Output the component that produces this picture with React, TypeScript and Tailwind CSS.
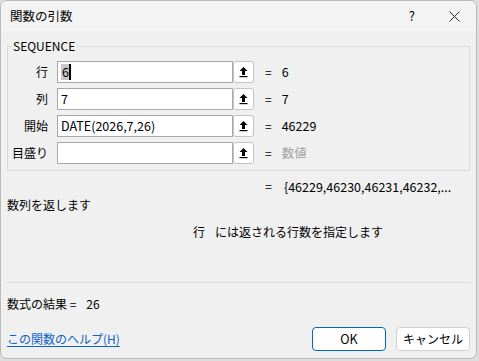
import React from "react";

const font = { fontFamily: '"Noto Sans CJK JP", "Noto Sans", sans-serif' };

function RefButton() {
  return (
    <button className="w-[21px] h-[22px] bg-white border border-[#c4c4c4] rounded-[3px] flex items-center justify-center">
      <svg width="11" height="12" viewBox="0 0 11 12">
        <path d="M5.5 1 L1.5 5 H4 V9 H7 V5 H9.5 Z" fill="#000" />
        <rect x="1.5" y="10" width="8" height="1.2" fill="#000" />
      </svg>
    </button>
  );
}

function ArgRow({ label, value, result, gray, selected }: { label: string; value: string; result: string; gray?: boolean; selected?: boolean }) {
  return (
    <div className="flex items-center h-[22px]">
      <div className="w-[40px] text-right text-[12px] leading-none">{label}</div>
      <div className="ml-[9px] w-[176px] h-[22px] bg-white border border-[#a8a8a8] flex items-center pl-[3px] text-[12.5px]">
        {selected ? (
          <span className="flex items-center">
            <span className="bg-[#c8c8c8] leading-[16px] pl-px">{value}</span>
            <span className="w-[2px] h-[16px] bg-black" />
          </span>
        ) : (
          <span>{value}</span>
        )}
      </div>
      <RefButton />
      <span className="ml-[11px] text-[12px]">=</span>
      <span className={"ml-[10px] text-[12.5px] " + (gray ? "text-[#a0a0a0]" : "text-black")}>{result}</span>
    </div>
  );
}

export default function App() {
  return (
    <div className="w-[479px] h-[361px] bg-[#dcdcdc]" style={font}>
      <div className="w-[477px] h-[359px] bg-[#f0f0f0] border border-[#b9b9b9] rounded-[7px] overflow-hidden flex flex-col text-black">
        <div className="h-[30px] bg-[#f3f3f3] flex items-center pl-[9px] shrink-0">
          <span className="text-[12.5px]">関数の引数</span>
          <span className="ml-auto mr-[34px] text-[13px]">?</span>
          <svg width="11" height="11" viewBox="0 0 11 11" className="mr-[16px]">
            <path d="M0.5 0.5 L10.5 10.5 M10.5 0.5 L0.5 10.5" stroke="#222" strokeWidth="1" />
          </svg>
        </div>
        <div className="flex-1 px-[6px] flex flex-col">
          <fieldset className="mt-[7px] border border-[#d9d9d9] h-[133px] pl-0">
            <legend className="ml-[4px] px-px text-[12px] leading-[16px]">SEQUENCE</legend>
            <div className="mt-[7px] flex flex-col gap-[5px]">
              <ArgRow label="行" value="6" result="6" selected />
              <ArgRow label="列" value="7" result="7" />
              <ArgRow label="開始" value="DATE(2026,7,26)" result="46229" />
              <ArgRow label="目盛り" value="" result="数値" gray />
            </div>
          </fieldset>
          <div className="mt-[7px] flex items-center h-[18px] pl-[258px] text-[12.5px]">
            <span>=</span>
            <span className="ml-[12px]">{"{46229,46230,46231,46232,..."}</span>
          </div>
          <div className="text-[12px] leading-[18px]">数列を返します</div>
          <div className="mt-[9px] pl-[186px] text-[12px] leading-[18px] flex">
            <span>行</span>
            <span className="ml-[10px]">には返される行数を指定します</span>
          </div>
          <div className="mt-[41px] border-t border-[#d9d9d9]" />
          <div className="mt-[12px] text-[12px] leading-[18px] flex">
            <span>数式の結果 =</span>
            <span className="ml-[10px]">26</span>
          </div>
          <div className="mt-[14px] flex items-center">
            <a className="text-[12px] text-[#0b63c7] underline underline-offset-2">この関数のヘルプ(H)</a>
            <button className="ml-auto w-[74px] h-[24px] bg-white border border-[#0067c0] rounded-[4px] text-[12.5px]">OK</button>
            <button className="ml-[10px] w-[74px] h-[24px] bg-white border border-[#d0d0d0] rounded-[4px] text-[12px]">キャンセル</button>
          </div>
        </div>
      </div>
    </div>
  );
}
